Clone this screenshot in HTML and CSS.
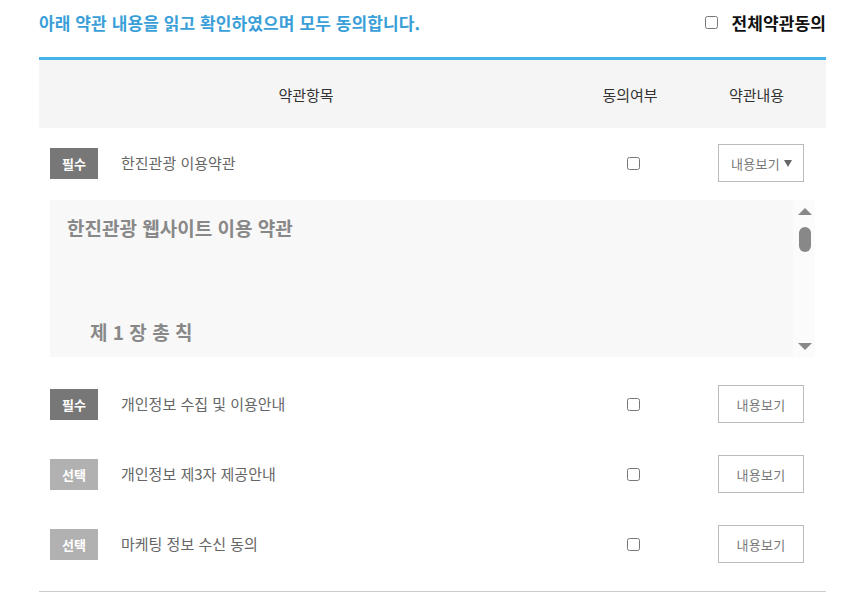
FILE: index.html
```html
<!DOCTYPE html>
<html lang="ko">
<head>
<meta charset="utf-8">
<title>약관동의</title>
<link rel="stylesheet" href="styles.css">
</head>
<body>
<div class="wrap">
  <div class="top">
    <h2 class="title">아래 약관 내용을 읽고 확인하였으며 모두 동의합니다.</h2>
    <label class="all"><input type="checkbox" class="chk"><span>전체약관동의</span></label>
  </div>
  <div class="table">
    <div class="thead">
      <div class="c1">약관항목</div>
      <div class="c2">동의여부</div>
      <div class="c3">약관내용</div>
    </div>

    <div class="row">
      <div class="c1 item"><span class="badge req">필수</span><span class="name">한진관광 이용약관</span></div>
      <div class="c2 cc"><input type="checkbox" class="chk"></div>
      <div class="c3 cb"><button class="view open">내용보기<span class="arrow"></span></button></div>
    </div>
    <div class="terms">
      <div class="terms-body">
        <p class="t-title">한진관광 웹사이트 이용 약관</p>
        <p class="t-chapter">제 1 장 총 칙</p>
      </div>
      <div class="scrollbar">
        <span class="sb-up"></span>
        <span class="sb-thumb"></span>
        <span class="sb-down"></span>
      </div>
    </div>

    <div class="row">
      <div class="c1 item"><span class="badge req">필수</span><span class="name">개인정보 수집 및 이용안내</span></div>
      <div class="c2 cc"><input type="checkbox" class="chk"></div>
      <div class="c3 cb"><button class="view">내용보기</button></div>
    </div>
    <div class="row">
      <div class="c1 item"><span class="badge opt">선택</span><span class="name">개인정보 제3자 제공안내</span></div>
      <div class="c2 cc"><input type="checkbox" class="chk"></div>
      <div class="c3 cb"><button class="view">내용보기</button></div>
    </div>
    <div class="row">
      <div class="c1 item"><span class="badge opt">선택</span><span class="name">마케팅 정보 수신 동의</span></div>
      <div class="c2 cc"><input type="checkbox" class="chk"></div>
      <div class="c3 cb"><button class="view">내용보기</button></div>
    </div>
  </div>
</div>
</body>
</html>
```

FILE: styles.css
```css
* { box-sizing: border-box; }
html, body { margin: 0; padding: 0; background: #fff; }
body {
  font-family: "Noto Sans CJK KR", "Noto Sans", sans-serif;
  color: #333;
}
.wrap {
  width: 787px;
  margin-left: 39px;
}
.top {
  height: 45px;
  display: flex;
  align-items: center;
  justify-content: space-between;
  margin-bottom: 12px;
}
.title {
  margin: 0;
  font-size: 17px;
  font-weight: 700;
  color: #3a9fd8;
  line-height: 20px;
  letter-spacing: 0.1px;
}
.all {
  display: flex;
  align-items: center;
  font-size: 17px;
  font-weight: 700;
  color: #111;
  line-height: 20px;
  letter-spacing: 0.1px;
}
.all .chk { margin: 0 14px 0 0; }
.chk {
  width: 13px;
  height: 13px;
  margin: 0;
}
.table {
  border-top: 3px solid #45b3e7;
  border-bottom: 1px solid #cccccc;
  padding-bottom: 12px;
}
.thead {
  display: flex;
  height: 68px;
  align-items: center;
  background: #f5f5f5;
  font-size: 15px;
  color: #333;
}
.thead > div { text-align: center; }
.c1 { width: 534px; }
.c2 { width: 114px; }
.c3 { width: 139px; }
.row {
  display: flex;
  align-items: center;
  height: 70px;
}
.item {
  display: flex;
  align-items: center;
  padding-left: 11px;
}
.badge {
  width: 48px;
  height: 31px;
  display: flex;
  align-items: center;
  justify-content: center;
  color: #fff;
  font-size: 13px;
  font-weight: 700;
  margin-right: 23px;
}
.badge.req { background: #777777; }
.badge.opt { background: #b1b1b1; }
.name {
  font-size: 15px;
  color: #666;
  line-height: 20px;
}
.cc {
  display: flex;
  justify-content: center;
  padding-left: 7px;
}
.cb {
  display: flex;
  justify-content: center;
  padding-left: 9px;
}
.view {
  width: 86px;
  height: 38px;
  background: #fff;
  border: 1px solid #bbbbbb;
  font-family: inherit;
  font-size: 13px;
  letter-spacing: 0.3px;
  color: #777;
  padding: 0;
  display: flex;
  align-items: center;
  justify-content: center;
}
.view.open { padding-left: 1px; }
.arrow {
  display: inline-block;
  width: 0;
  height: 0;
  border-left: 4px solid transparent;
  border-right: 4px solid transparent;
  border-top: 7px solid #666;
  margin-left: 4px;
}
.terms {
  display: flex;
  height: 157px;
  margin: 2px 11px 12px 11px;
  background: #f8f8f8;
}
.terms-body {
  flex: 1;
  padding: 15px 17px 0;
  overflow: hidden;
}
.terms-body p {
  margin: 0;
  font-size: 19px;
  font-weight: 700;
  color: #888;
  line-height: 26px;
}
.t-chapter {
  margin-top: 78px !important;
  padding-left: 23px;
}
.scrollbar {
  width: 22px;
  background: #fbfbfb;
  display: flex;
  flex-direction: column;
  align-items: center;
  padding: 8px 0 7px 1px;
}
.sb-up, .sb-down {
  width: 0;
  height: 0;
  border-left: 7px solid transparent;
  border-right: 7px solid transparent;
}
.sb-up { border-bottom: 7px solid #888; }
.sb-down { border-top: 7px solid #888; margin-top: auto; }
.sb-thumb {
  width: 12px;
  height: 25px;
  border-radius: 6px;
  background: #888;
  margin-top: 12px;
}
```
